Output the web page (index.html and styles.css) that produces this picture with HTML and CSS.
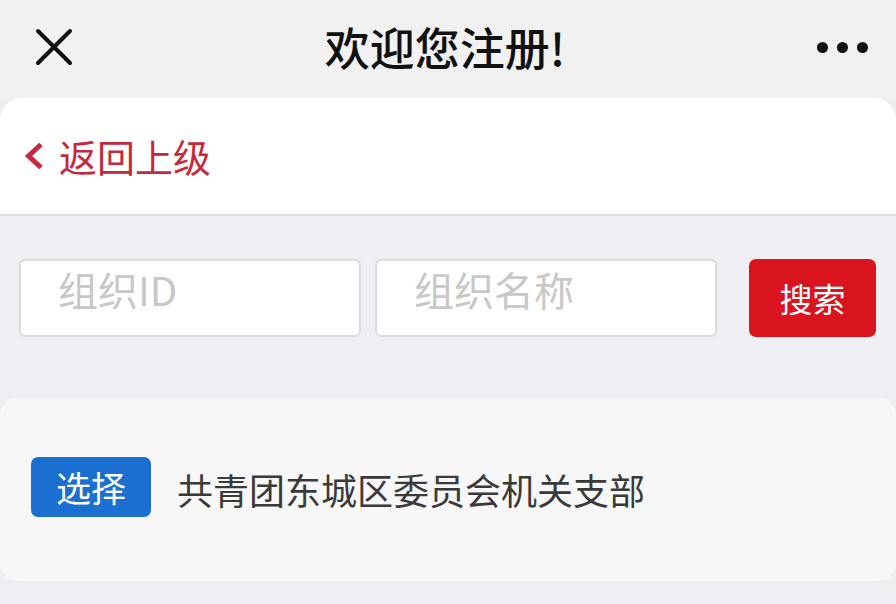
FILE: index.html
```html
<!DOCTYPE html>
<html lang="zh-CN">
<head>
<meta charset="utf-8">
<title>欢迎您注册!</title>
<link rel="stylesheet" href="styles.css">
</head>
<body>
<div class="page">
  <header class="topbar">
    <span class="icon-close">
      <svg width="38" height="38" viewBox="0 0 38 38"><path d="M3 3 L35 35 M35 3 L3 35" stroke="#111" stroke-width="4" stroke-linecap="round" fill="none"/></svg>
    </span>
    <h1 class="title">欢迎您注册!</h1>
    <span class="icon-more"><i></i><i></i><i></i></span>
  </header>
  <div class="back-card">
    <a class="back-link">
      <svg class="chev" width="20" height="26" viewBox="0 0 20 26"><path d="M17 1.5 L4.5 13 L17 24.5" stroke="#c42a3c" stroke-width="5" fill="none" stroke-linejoin="miter"/></svg>
      <span>返回上级</span>
    </a>
  </div>
  <div class="search-row">
    <div class="field"><span class="ph">组织ID</span></div>
    <div class="field"><span class="ph">组织名称</span></div>
    <button class="btn-search">搜索</button>
  </div>
  <div class="result-card">
    <button class="btn-select">选择</button>
    <span class="org-name">共青团东城区委员会机关支部</span>
  </div>
</div>
</body>
</html>
```
FILE: styles.css
```css
html, body {
  margin: 0;
  padding: 0;
  background: #eeeef3;
  font-family: "Noto Sans CJK SC", "Noto Sans", sans-serif;
}
.page {
  width: 896px;
  height: 604px;
  overflow: hidden;
  background: #eeeef3;
}
.topbar {
  height: 100px;
  background: #f1f1f1;
  display: flex;
  align-items: center;
  justify-content: space-between;
  padding: 0 28px 0 35px;
  box-sizing: border-box;
}
.icon-close {
  display: flex;
  width: 38px;
  height: 38px;
  margin-top: -6px;
}
.title {
  margin: 0;
  font-size: 45px;
  font-weight: 500;
  line-height: 60px;
  color: #111;
  margin-top: -7px;
}
.icon-more {
  display: flex;
  gap: 9px;
  margin-top: -6px;
}
.icon-more i {
  display: block;
  width: 11px;
  height: 11px;
  border-radius: 50%;
  background: #111;
}
.back-card {
  background: #fff;
  border-radius: 22px 22px 0 0;
  height: 118px;
  margin-top: -2px;
  box-sizing: border-box;
  border-bottom: 2px solid #dddde0;
  display: flex;
  align-items: center;
  padding-left: 24px;
}
.back-link {
  display: flex;
  align-items: center;
  gap: 15px;
  color: #c42a3c;
  font-size: 38px;
  line-height: 50px;
}
.search-row {
  display: flex;
  align-items: center;
  padding: 43px 20px 0 19px;
}
.field {
  width: 342px;
  height: 78px;
  box-sizing: border-box;
  background: #fff;
  border: 2px solid #dcdcdc;
  border-radius: 6px;
  padding: 2px 0 0 37px;
  margin-right: 14px;
}
.field + .field {
  margin-right: 32px;
}
.ph {
  color: #c8c8c8;
  font-size: 40px;
  line-height: 52px;
}
.btn-search {
  width: 127px;
  height: 78px;
  border: none;
  border-radius: 7px;
  background: #d9141e;
  color: #fff;
  font-family: inherit;
  font-size: 33px;
  padding: 0;
}
.result-card {
  margin-top: 61px;
  height: 183px;
  background: #f7f7f7;
  border-radius: 18px;
  display: flex;
  align-items: center;
  padding: 0 0 6px 31px;
  box-sizing: border-box;
  gap: 26px;
}
.btn-select {
  width: 120px;
  height: 60px;
  border: none;
  border-radius: 7px;
  background: #1a6fd1;
  color: #fff;
  font-family: inherit;
  font-size: 35px;
  padding: 0;
}
.org-name {
  font-size: 36px;
  color: #3a3a3a;
  line-height: 50px;
  margin-top: 4px;
}
```
